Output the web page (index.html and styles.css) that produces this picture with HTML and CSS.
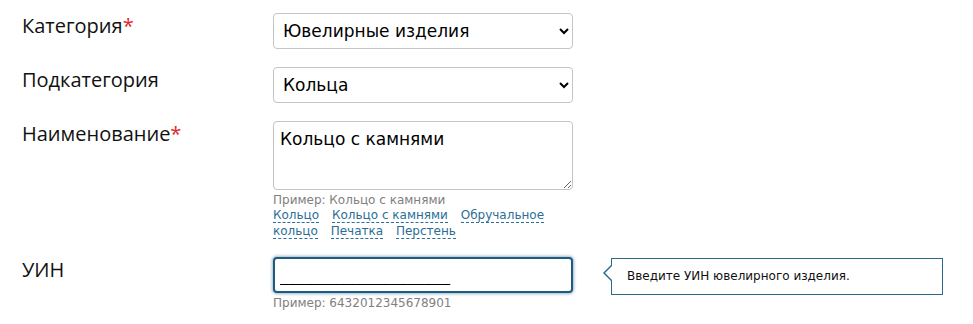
FILE: index.html
```html
<!DOCTYPE html>
<html lang="ru">
<head>
	<meta charset="UTF-8">
	<title>Изделие</title>
	<link rel="stylesheet" href="styles.css">
</head>
<body>
	<form class="item-form">
		<div class="row">
			<label class="label">Категория<span class="req">*</span></label>
			<div class="field">
				<select class="control">
					<option>Ювелирные изделия</option>
				</select>
			</div>
		</div>
		<div class="row">
			<label class="label">Подкатегория</label>
			<div class="field">
				<select class="control">
					<option>Кольца</option>
				</select>
			</div>
		</div>
		<div class="row">
			<label class="label">Наименование<span class="req">*</span></label>
			<div class="field">
				<textarea class="control area">Кольцо с камнями</textarea>
				<div class="hint">Пример: Кольцо с камнями</div>
				<div class="suggest">
					<a href="#">Кольцо</a>
					<a href="#">Кольцо с камнями</a>
					<a href="#">Обручальное кольцо</a>
					<a href="#">Печатка</a>
					<a href="#">Перстень</a>
				</div>
			</div>
		</div>
		<div class="row">
			<label class="label">УИН</label>
			<div class="field">
				<input class="control uin" type="text" value="____________________">
				<div class="hint">Пример: 6432012345678901</div>
			</div>
			<div class="tip">Введите УИН ювелирного изделия.</div>
		</div>
	</form>
</body>
</html>
```

FILE: styles.css
```css
*{margin: 0;padding: 0;box-sizing: border-box;}
body{
	background: #fff;
	font-family: "DejaVu Sans", Verdana, sans-serif;
	color: #000;
}
.item-form{
	padding: 13px 0 0 22px;
}
.row{
	display: flex;
	align-items: flex-start;
	margin-bottom: 18px;
}
.label{
	width: 251px;
	font: 20px/26px "Open Sans", sans-serif;
	color: #111;
}
.req{
	color: #e0262b;
}
.field{
	width: 300px;
}
.control{
	display: block;
	width: 300px;
	height: 36px;
	border: 1px solid #c4c4c4;
	border-radius: 4px;
	background: #fff;
	font: 17px "DejaVu Sans", Verdana, sans-serif;
	color: #000;
	padding: 0 6px 0 5px;
}
.area{
	height: 69px;
	padding: 7px 6px;
	resize: vertical;
}
.uin{
	height: 36px;
	border: 2px solid #1d5b7f;
	box-shadow: 0 0 3px 1px rgba(29, 91, 127, .45);
	outline: none;
	padding: 0 5px;
}
.hint{
	margin-top: 3px;
	font: 12px/14px "DejaVu Sans", Verdana, sans-serif;
	color: #808080;
}
.suggest{
	font: 12px/16px "DejaVu Sans", Verdana, sans-serif;
	width: 290px;
}
.suggest a{
	color: #2a6e98;
	text-decoration: none;
	border-bottom: 1px dashed #2a6e98;
	margin-right: 9px;
}
.tip{
	position: relative;
	margin-left: 38px;
	margin-top: 1px;
	width: 332px;
	height: 37px;
	border: 1px solid #2b6a8c;
	padding: 0 0 0 15px;
	font: 12px/35px "DejaVu Sans", Verdana, sans-serif;
	color: #111;
	background: #fff;
}
.tip:before{
	content: "";
	position: absolute;
	left: -9px;
	top: 6px;
	border: 8px solid transparent;
	border-right-color: #2b6a8c;
	border-left-width: 0;
	width: 0;
	height: 0;
}
.tip:after{
	content: "";
	position: absolute;
	left: -7px;
	top: 7px;
	border: 7px solid transparent;
	border-right-color: #fff;
	border-left-width: 0;
}
```
